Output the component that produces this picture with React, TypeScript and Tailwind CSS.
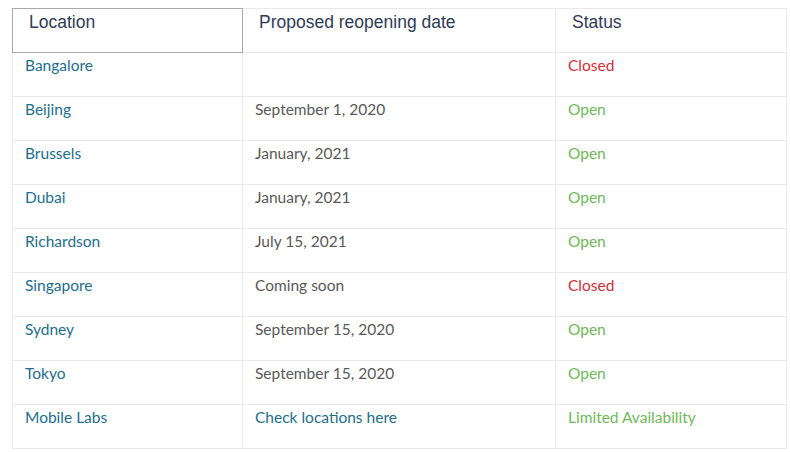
const rows = [
  { loc: 'Bangalore', date: '', status: 'Closed' },
  { loc: 'Beijing', date: 'September 1, 2020', status: 'Open' },
  { loc: 'Brussels', date: 'January, 2021', status: 'Open' },
  { loc: 'Dubai', date: 'January, 2021', status: 'Open' },
  { loc: 'Richardson', date: 'July 15, 2021', status: 'Open' },
  { loc: 'Singapore', date: 'Coming soon', status: 'Closed' },
  { loc: 'Sydney', date: 'September 15, 2020', status: 'Open' },
  { loc: 'Tokyo', date: 'September 15, 2020', status: 'Open' },
  { loc: 'Mobile Labs', date: 'Check locations here', status: 'Limited Availability', link: true },
];

export default function App() {
  return (
    <div className="bg-white w-[790px] h-[452px] pt-2 pl-3">
      <table className="border-collapse table-fixed w-[774px]">
        <colgroup>
          <col className="w-[230px]" />
          <col className="w-[313px]" />
          <col className="w-[231px]" />
        </colgroup>
        <thead>
          <tr className="h-[44px] align-top text-left font-['Liberation_Sans',Arial,sans-serif] text-[17.5px] font-normal text-[#2f3b56]">
            <th className="border border-[#a9a9a9] pl-4 pt-0 font-normal">Location</th>
            <th className="border border-[#e9e9e9] pl-4 pt-0 font-normal">Proposed reopening date</th>
            <th className="border border-[#e9e9e9] pl-4 pt-0 font-normal">Status</th>
          </tr>
        </thead>
        <tbody className="font-['Lato','Open_Sans',sans-serif] text-[15.5px]">
          {rows.map((r) => (
            <tr key={r.loc} className="h-[44px] align-top">
              <td className="border border-[#e9e9e9] pl-[12px] pt-[1px] text-[#236e8c]">{r.loc}</td>
              <td className={`border border-[#e9e9e9] pl-[12px] pt-[1px] ${r.link ? 'text-[#236e8c]' : 'text-[#595959]'}`}>{r.date}</td>
              <td className={`border border-[#e9e9e9] pl-[12px] pt-[1px] ${r.status === 'Closed' ? 'text-[#cf2e38]' : 'text-[#70b85a]'}`}>{r.status}</td>
            </tr>
          ))}
        </tbody>
      </table>
    </div>
  );
}
